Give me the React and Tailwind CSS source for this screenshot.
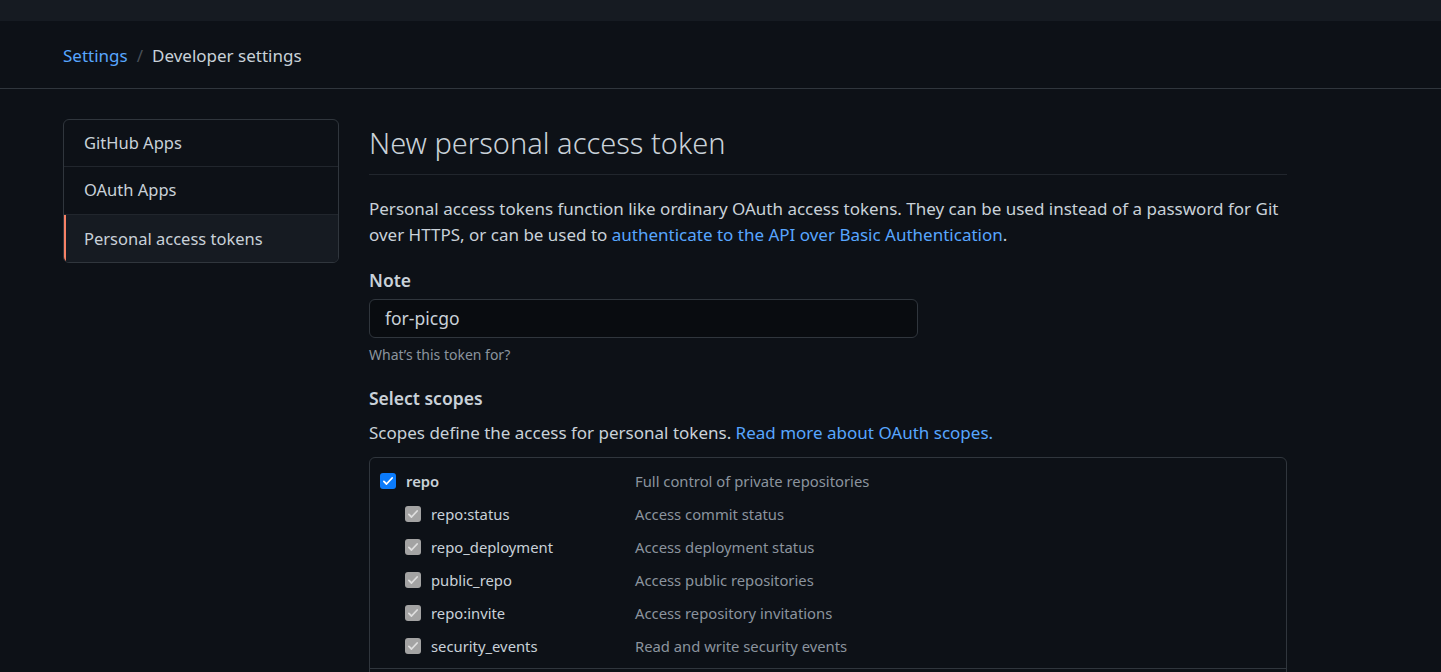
import React from "react";

const font = { fontFamily: '"Noto Sans", "Liberation Sans", sans-serif' };

const Check = ({ disabled }) => (
  <span
    className={
      "flex h-4 w-4 shrink-0 items-center justify-center rounded-[3px] " +
      (disabled ? "bg-[#a3a3a3]" : "bg-[#0b7bfb]")
    }
  >
    <svg viewBox="0 0 16 16" className="h-3 w-3" fill="none">
      <path
        d="M2.5 8.5l3.5 3.5 7.5-8"
        stroke={disabled ? "#dedede" : "#ffffff"}
        strokeWidth="2.4"
        strokeLinecap="round"
        strokeLinejoin="round"
      />
    </svg>
  </span>
);

const subScopes = [
  ["repo:status", "Access commit status"],
  ["repo_deployment", "Access deployment status"],
  ["public_repo", "Access public repositories"],
  ["repo:invite", "Access repository invitations"],
  ["security_events", "Read and write security events"],
];

const Sidebar = () => (
  <nav className="w-[276px] shrink-0 self-start overflow-hidden rounded-md border border-[#30363d] text-[16.5px] text-[#c9d1d9]">
    <div className="flex h-[47px] items-center border-b border-[#21262d] px-5">GitHub Apps</div>
    <div className="flex h-[48px] items-center border-b border-[#21262d] px-5">OAuth Apps</div>
    <div className="flex h-[47px] items-center border-l-2 border-[#f78166] bg-[#161b22] pl-[18px] pt-[1px]">
      Personal access tokens
    </div>
  </nav>
);

const App = () => {
  return (
    <div className="h-[672px] overflow-hidden bg-[#0d1117] text-[#c9d1d9]" style={font}>
      <div className="h-[21px] bg-[#161b22]" />
      <div className="flex h-[68px] items-center border-b border-[#30363d] px-[63px] pt-[2px] text-[17px]">
        <a className="text-[#58a6ff]">Settings</a>
        <span className="mx-[9px] text-[#484f58]">/</span>
        <span>Developer settings</span>
      </div>

      <div className="flex gap-[30px] px-[63px] pt-[30px]">
        <Sidebar />

        <main className="w-[918px] pt-[2px]">
          <h1 className="border-b border-[#21262d] pb-[9px] text-[29px] font-light leading-[44px]">
            New personal access token
          </h1>

          <p className="mt-[21px] text-[17px] leading-[26px]">
            Personal access tokens function like ordinary OAuth access tokens. They can be used instead of a password
            for Git over HTTPS, or can be used to{" "}
            <a className="text-[#58a6ff]">authenticate to the API over Basic Authentication</a>.
          </p>

          <label className="mt-[20px] block text-[17.5px] font-semibold leading-[24px]">Note</label>
          <div className="mt-[7px] flex h-[39px] w-[549px] items-center rounded-md border border-[#30363d] bg-[#090c10] px-[15px] text-[17.5px]">
            for-picgo
          </div>
          <p className="mt-[7px] text-[14px] leading-[20px] text-[#8b949e]">What’s this token for?</p>

          <h3 className="mt-[21px] text-[17.5px] font-semibold leading-[24px]">Select scopes</h3>
          <p className="mt-[11px] text-[17px] leading-[24px]">
            Scopes define the access for personal tokens.{" "}
            <a className="text-[#58a6ff]">Read more about OAuth scopes.</a>
          </p>

          <div className="mt-[12px] rounded-md border border-[#30363d] text-[14.8px]">
            <div className="pb-[10px] pt-[11px]">
              <div className="flex h-[24px] items-center pl-[10px]">
                <Check />
                <span className="ml-[10px] w-[229px] font-semibold">repo</span>
                <span className="text-[#8b949e]">Full control of private repositories</span>
              </div>
              {subScopes.map(([name, desc]) => (
                <div key={name} className="mt-[9px] flex h-[24px] items-center pl-[35px]">
                  <Check disabled />
                  <span className="ml-[10px] w-[204px]">{name}</span>
                  <span className="text-[#8b949e]">{desc}</span>
                </div>
              ))}
            </div>
            <div className="border-t border-[#30363d] py-[12px]">
              <div className="flex h-[24px] items-center pl-[10px]">
                <span className="h-4 w-4 rounded-[3px] border border-[#8b949e]" />
                <span className="ml-[10px] w-[229px] font-semibold">workflow</span>
                <span className="text-[#8b949e]">Update GitHub Action workflows</span>
              </div>
            </div>
          </div>
        </main>
      </div>
    </div>
  );
};

export default App;
